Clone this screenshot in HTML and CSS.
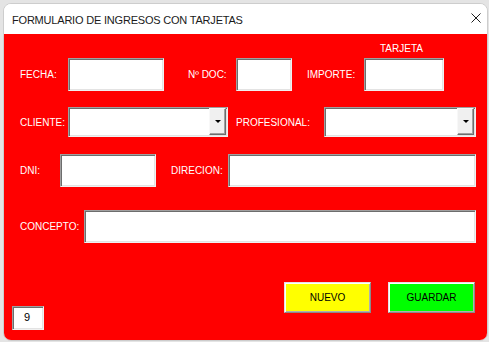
FILE: index.html
```html
<!DOCTYPE html>
<html>
<head>
<meta charset="utf-8">
<title>Formulario de ingresos con tarjetas</title>
<link rel="stylesheet" href="styles.css">
</head>
<body>
<div class="window">
  <div class="titlebar">
    <span class="title">FORMULARIO DE INGRESOS CON TARJETAS</span>
    <svg class="close" width="10" height="10" viewBox="0 0 10 10"><path d="M0.5 0.5 L9.5 9.5 M9.5 0.5 L0.5 9.5" stroke="#1e1e1e" stroke-width="1"/></svg>
  </div>
  <div class="form">
    <div class="caption-row"><span class="caption">TARJETA</span></div>

    <div class="row row-a">
      <span class="lbl l-fecha">FECHA:</span><div class="field f-fecha"></div>
      <span class="lbl l-doc">Nº DOC:</span><div class="field f-doc"></div>
      <span class="lbl l-importe">IMPORTE:</span><div class="field f-importe"></div>
    </div>

    <div class="row row-b">
      <span class="lbl l-cliente">CLIENTE:</span>
      <div class="field combo f-cliente"><div class="drop"><svg width="6" height="3" viewBox="0 0 6 3"><polygon points="0,0 6,0 3,3" fill="#000"/></svg></div></div>
      <span class="lbl l-prof">PROFESIONAL:</span>
      <div class="field combo f-prof"><div class="drop"><svg width="6" height="3" viewBox="0 0 6 3"><polygon points="0,0 6,0 3,3" fill="#000"/></svg></div></div>
    </div>

    <div class="row row-c">
      <span class="lbl l-dni">DNI:</span><div class="field f-dni"></div>
      <span class="lbl l-dir">DIRECION:</span><div class="field f-dir"></div>
    </div>

    <div class="row row-d">
      <span class="lbl l-concepto">CONCEPTO:</span><div class="field f-concepto"></div>
    </div>

    <div class="footer">
      <div class="field numbox">9</div>
      <div class="btn btn-nuevo">NUEVO</div>
      <div class="btn btn-guardar">GUARDAR</div>
    </div>
  </div>
</div>
</body>
</html>
```

FILE: styles.css
```css
* { box-sizing: border-box; }

html, body {
  margin: 0;
  padding: 0;
}

body {
  width: 489px;
  height: 342px;
  background: #e4e4e4;
  font-family: "Liberation Sans", Arial, sans-serif;
  overflow: hidden;
}

.window {
  margin: 3px 0 0 3px;
  width: 485px;
  height: 338px;
  border: 1px solid #cdcdcd;
  border-radius: 8px;
  overflow: hidden;
  background: #fff;
  display: flex;
  flex-direction: column;
}

.titlebar {
  height: 30px;
  flex: none;
  display: flex;
  align-items: center;
  justify-content: space-between;
  padding: 0 6px 0 8px;
  background: #fff;
}

.title {
  font-size: 11px;
  letter-spacing: -0.2px;
  color: #1a1a1a;
  margin-top: 1px;
}

.close {
  margin-bottom: 3px;
  display: block;
}

.form {
  flex: 1;
  background: #ff0000;
  display: flex;
  flex-direction: column;
}

.caption-row {
  height: 24px;
  flex: none;
  padding: 9px 0 0 376px;
}

.caption {
  display: block;
  font-size: 10px;
  line-height: 12px;
  color: #fff;
}

.row {
  display: flex;
  align-items: center;
  flex: none;
}

.row-a { height: 33px; }
.row-b { height: 30px; margin-top: 16px; }
.row-c { height: 33px; margin-top: 17px; }
.row-d { height: 33px; margin-top: 23px; }

.lbl {
  flex: none;
  font-size: 10px;
  color: #fff;
  white-space: nowrap;
}

.field {
  flex: none;
  height: 100%;
  background: #fff;
  border: 1px solid;
  border-color: #a0a0a0 #f0f0f0 #f0f0f0 #a0a0a0;
  box-shadow: inset 1px 1px 0 #6d6d6d, inset -1px -1px 0 #e3e3e3;
}

.l-fecha { margin-left: 16px; width: 48px; }
.f-fecha { width: 96px; }
.l-doc { margin-left: 24px; width: 48px; }
.f-doc { width: 56px; }
.l-importe { margin-left: 15px; width: 57px; }
.f-importe { width: 80px; }

.l-cliente { margin-left: 16px; width: 48px; }
.f-cliente { width: 160px; }
.l-prof { margin-left: 8px; width: 88px; }
.f-prof { width: 152px; }

.l-dni { margin-left: 16px; width: 40px; }
.f-dni { width: 96px; }
.l-dir { margin-left: 15px; width: 57px; }
.f-dir { width: 248px; }

.l-concepto { margin-left: 16px; width: 64px; }
.f-concepto { width: 392px; }

.combo {
  display: flex;
  justify-content: flex-end;
  align-items: flex-start;
  padding: 0 1px 1px 0;
}

.drop {
  width: 17px;
  height: 27px;
  background: #f0f0f0;
  border: 1px solid;
  border-color: #f8f8f8 #6d6d6d #6d6d6d #f8f8f8;
  box-shadow: inset -1px -1px 0 #a0a0a0;
  display: flex;
  align-items: center;
  justify-content: center;
}

.drop svg { display: block; }

.footer {
  display: flex;
  align-items: flex-start;
  margin-top: 39px;
  padding-left: 8px;
}

.numbox {
  width: 32px;
  height: 24px;
  margin-top: 24px;
  display: flex;
  align-items: center;
  padding: 0 0 2px 11px;
  font-size: 11px;
  color: #000;
}

.btn {
  flex: none;
  width: 87px;
  height: 31px;
  display: flex;
  align-items: center;
  justify-content: center;
  font-size: 10px;
  color: #000;
  border: 1px solid;
  border-color: #e3e3e3 #8a8a8a #8a8a8a #e3e3e3;
  box-shadow: inset 1px 1px 0 #fff, inset -1px -1px 0 #b0b0b0;
}

.btn-nuevo {
  margin-left: 240px;
  background: #ffff00;
}

.btn-guardar {
  margin-left: 17px;
  background: #00ff00;
}
```
